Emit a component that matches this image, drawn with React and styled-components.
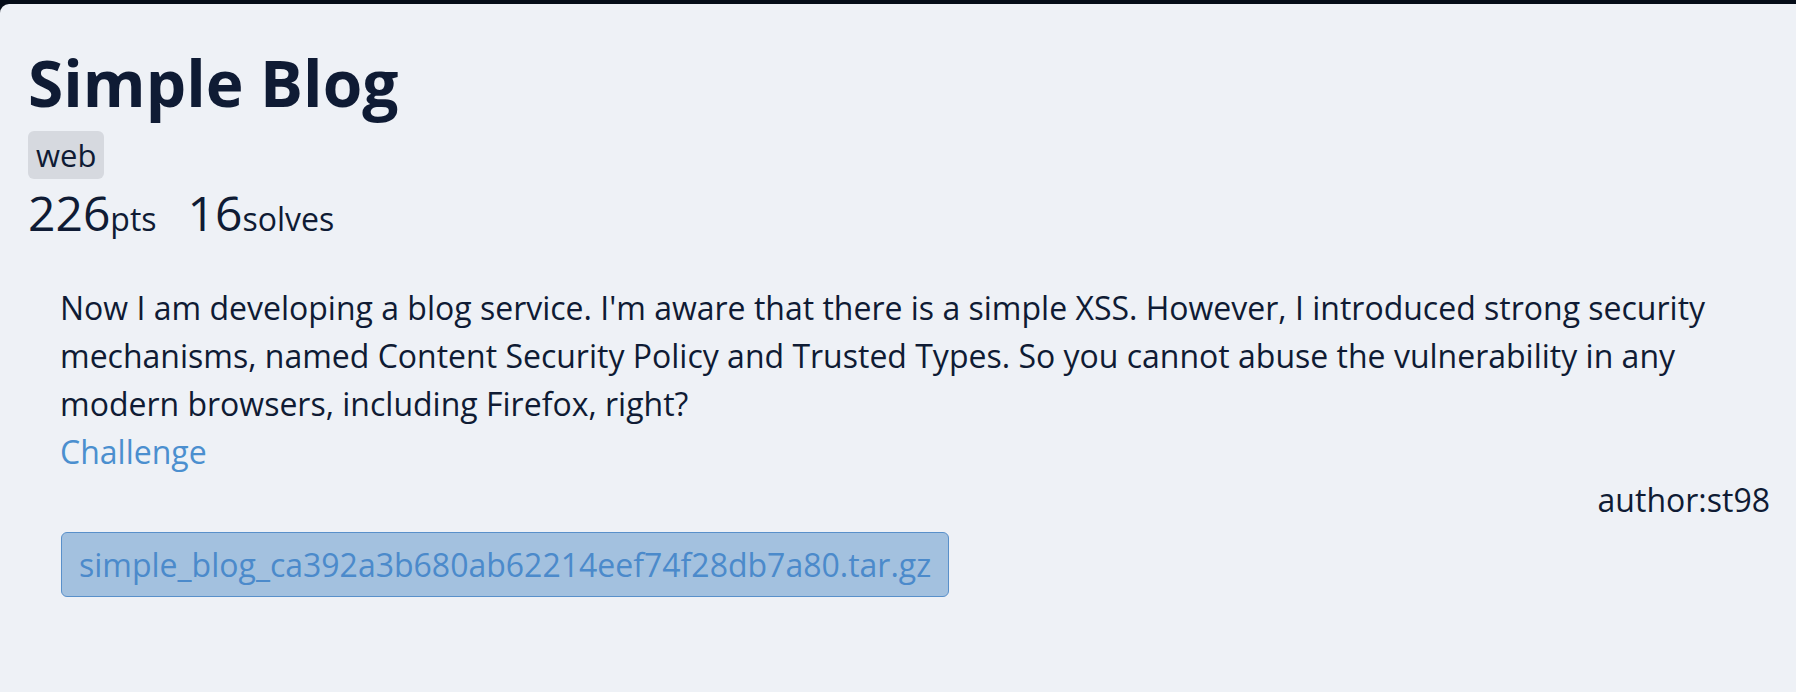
import React from "react";
import styled, { createGlobalStyle } from "styled-components";

const GlobalStyle = createGlobalStyle`
  html, body {
    margin: 0;
    padding: 0;
    background: #050c18;
  }
  body {
    font-family: "Open Sans", "Noto Sans", sans-serif;
    color: #0f1b34;
  }
`;

const Card = styled.div`
  margin-top: 4px;
  min-height: 688px;
  box-sizing: border-box;
  background: #eef1f6;
  border-top-left-radius: 9px;
  padding: 37px 26px 40px 28px;
`;

const Title = styled.h1`
  margin: 0 0 7px;
  font-size: 64px;
  font-weight: 700;
  line-height: 1.3;
`;

const Tag = styled.span`
  display: inline-block;
  background: #d6d9df;
  border-radius: 6px;
  padding: 0 8px;
  font-size: 31px;
  line-height: 48px;
`;

const Stats = styled.div`
  display: flex;
  align-items: baseline;
  gap: 31px;
  margin-top: 5px;
`;

const Stat = styled.div`
  font-size: 48px;
  line-height: 1.2;

  small {
    font-size: 32px;
  }
`;

const Body = styled.div`
  margin: 42px 0 0 32px;
  font-size: 32px;
  line-height: 48px;
`;

const Description = styled.p`
  margin: 0;
`;

const ChallengeLink = styled.a`
  color: #4b8fcf;
  text-decoration: none;
`;

const Author = styled.div`
  text-align: right;
  font-size: 32px;
  line-height: 48px;
`;

const Files = styled.div`
  margin: 8px 0 0 33px;
`;

const FileButton = styled.a`
  display: inline-block;
  background: #a3c1df;
  border: 1px solid #5990ca;
  border-radius: 6px;
  color: #4b8acb;
  font-size: 32px;
  line-height: 63px;
  padding: 0 17px;
  text-decoration: none;
`;

export default function App() {
  return (
    <>
      <GlobalStyle />
      <Card>
        <Title>Simple Blog</Title>
        <Tag>web</Tag>
        <Stats>
          <Stat>226<small>pts</small></Stat>
          <Stat>16<small>solves</small></Stat>
        </Stats>
        <Body>
          <Description>
            Now I am developing a blog service. I'm aware that there is a simple XSS. However, I introduced strong security mechanisms, named Content Security Policy and Trusted Types. So you cannot abuse the vulnerability in any modern browsers, including Firefox, right?
          </Description>
          <ChallengeLink href="#">Challenge</ChallengeLink>
        </Body>
        <Author>author:st98</Author>
        <Files>
          <FileButton href="#">simple_blog_ca392a3b680ab62214eef74f28db7a80.tar.gz</FileButton>
        </Files>
      </Card>
    </>
  );
}
